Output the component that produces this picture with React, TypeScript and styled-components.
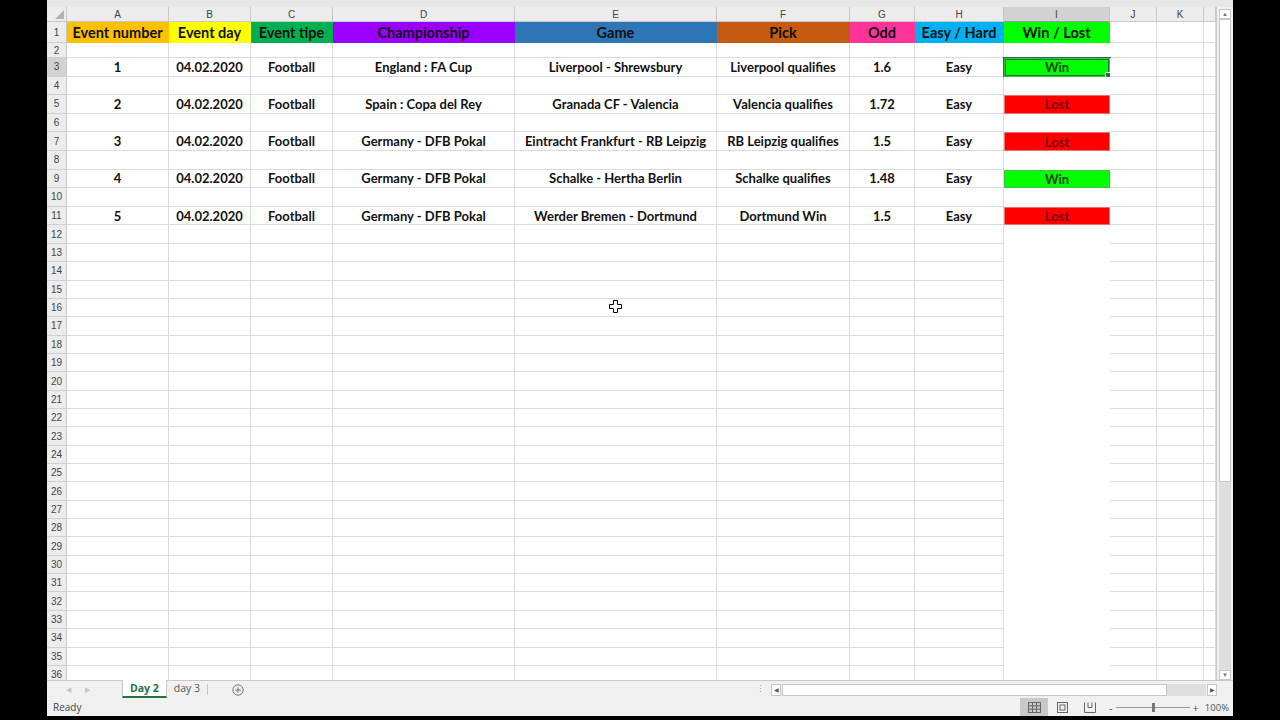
import styled, { createGlobalStyle } from "styled-components"

const GlobalStyle = createGlobalStyle`
  html, body {
    margin: 0;
    background: #000;
  }
`

const Screen = styled.div`
  width: 1280px;
  height: 720px;
  background: #000;
  display: flex;
  overflow: hidden;
  position: relative;
`

const Window = styled.div`
  margin-left: 47px;
  width: 1186px;
  height: 716px;
  background: #f0f0f0;
  display: flex;
  flex-direction: column;
`

const TopStrip = styled.div`
  height: 7px;
  background: #e6e6e6;
`

const Main = styled.div`
  display: flex;
  height: 673px;
`

const Sheet = styled.div`
  display: grid;
  grid-template-columns: 20px 102px 82px 82px 182px 202px 133px 65px 89px 106px 47px 47px 12px;
  grid-template-rows: 15px 21px 15px repeat(10, 18.6px) repeat(24, 18.35px);
  width: 1169px;
  overflow: hidden;
  background: #fff;
  position: relative;
`

const Corner = styled.div`
  background: #ececec;
  border-right: 1px solid #c8c8c8;
  border-bottom: 1px solid #c8c8c8;
  display: flex;
  align-items: flex-end;
  justify-content: flex-end;
  padding: 0 2px 2px 0;
  box-sizing: border-box;
`

const HeadCell = styled.div<{ $active?: boolean }>`
  box-sizing: border-box;
  background: ${(p) => (p.$active ? "#d2d2d2" : "#ececec")};
  border-right: 1px solid #c8c8c8;
  border-bottom: 1px solid ${(p) => (p.$active ? "#9e9e9e" : "#c8c8c8")};
  display: flex;
  align-items: center;
  justify-content: center;
  font-family: "Liberation Sans", Arial, sans-serif;
  font-size: 10px;
  color: #444;
  overflow: hidden;
`

const RowHead = styled(HeadCell)`
  border-bottom: 1px solid #d0d0d0;
`

const Cell = styled.div<{ $fill?: string; $big?: boolean }>`
  box-sizing: border-box;
  background: ${(p) => p.$fill ?? "#fff"};
  border-right: 1px solid ${(p) => p.$fill ?? "#dadada"};
  border-bottom: 1px solid ${(p) => p.$fill ?? "#dadada"};
  display: flex;
  align-items: center;
  justify-content: center;
  font-family: Lato, "Open Sans", sans-serif;
  font-weight: 700;
  font-size: ${(p) => (p.$big ? "14.5px" : "13px")};
  color: #111;
  white-space: nowrap;
  overflow: hidden;
  position: relative;
`

const ResultCell = styled.div<{ $fill: string; $edge: string; $ink: string; $selected?: boolean }>`
  box-sizing: border-box;
  background: ${(p) => p.$fill};
  border: 1px solid ${(p) => p.$edge};
  display: flex;
  align-items: center;
  justify-content: center;
  font-family: Lato, "Open Sans", sans-serif;
  font-weight: 700;
  font-size: 13px;
  color: ${(p) => p.$ink};
  position: relative;
  box-shadow: ${(p) => (p.$selected ? "0 0 0 1px #217346, inset 0 0 0 1px #217346" : "none")};
`

const Handle = styled.span`
  position: absolute;
  right: -3px;
  bottom: -3px;
  width: 5px;
  height: 5px;
  background: #217346;
  border: 1px solid #fff;
`

const VScroll = styled.div`
  width: 17px;
  border-left: 1px solid #c8c8c8;
  box-sizing: border-box;
  background: #f0f0f0;
  display: flex;
  flex-direction: column;
  align-items: center;
  padding-top: 2px;
`

const ScrollBtn = styled.div`
  width: 12px;
  height: 10px;
  background: #fff;
  border: 1px solid #c6c6c6;
  box-sizing: border-box;
  display: flex;
  align-items: center;
  justify-content: center;
  font-size: 6px;
  color: #777;
`

const VTrack = styled.div`
  flex: 1;
  width: 12px;
  background: #dedede;
  display: flex;
  flex-direction: column;
`

const VThumb = styled.div`
  height: 463px;
  background: #fff;
  border: 1px solid #c6c6c6;
  box-sizing: border-box;
`

const TabBar = styled.div`
  height: 18px;
  display: flex;
  align-items: stretch;
  background: #f0f0f0;
  border-top: 1px solid #c8c8c8;
  box-sizing: border-box;
`

const NavArrows = styled.div`
  width: 75px;
  display: flex;
  align-items: center;
  gap: 14px;
  padding-left: 19px;
  font-size: 7px;
  color: #c4c4c4;
  box-sizing: border-box;
`

const Tab = styled.div<{ $active?: boolean }>`
  padding: 0 ${(p) => (p.$active ? "7px" : "6px")};
  display: flex;
  align-items: center;
  font-family: "Open Sans", "Noto Sans", sans-serif;
  font-size: 10.5px;
  font-weight: ${(p) => (p.$active ? 700 : 400)};
  color: ${(p) => (p.$active ? "#217346" : "#555")};
  background: ${(p) => (p.$active ? "#fff" : "transparent")};
  border-bottom: 2px solid ${(p) => (p.$active ? "#217346" : "transparent")};
  border-left: 1px solid ${(p) => (p.$active ? "#c8c8c8" : "transparent")};
  border-right: 1px solid ${(p) => (p.$active ? "#c8c8c8" : "transparent")};
  margin-top: -1px;
`

const TabSep = styled.div`
  width: 1px;
  margin: 3px 0;
  background: #c8c8c8;
`

const AddSheet = styled.div`
  margin-left: 24px;
  display: flex;
  align-items: center;
`

const Spacer = styled.div`
  flex: 1;
`

const Dots = styled.div`
  width: 22px;
  display: flex;
  align-items: center;
  justify-content: center;
  font-size: 9px;
  color: #999;
  line-height: 1;
`

const HScroll = styled.div`
  width: 446px;
  display: flex;
  align-items: center;
  gap: 1px;
  margin-right: 16px;
`

const HBtn = styled.div`
  width: 10px;
  height: 12px;
  background: #fff;
  border: 1px solid #c6c6c6;
  box-sizing: border-box;
  display: flex;
  align-items: center;
  justify-content: center;
  font-size: 6px;
  color: #555;
`

const HTrack = styled.div`
  flex: 1;
  height: 12px;
  background: #dedede;
  display: flex;
`

const HThumb = styled.div`
  width: 385px;
  background: #fff;
  border: 1px solid #c6c6c6;
  box-sizing: border-box;
`

const StatusBar = styled.div`
  height: 18px;
  display: flex;
  align-items: center;
  padding-left: 6px;
  font-family: "Open Sans", "Noto Sans", sans-serif;
  font-size: 10px;
  color: #444;
`

const ViewBtn = styled.div<{ $on?: boolean }>`
  width: 28px;
  height: 18px;
  display: flex;
  align-items: center;
  justify-content: center;
  background: ${(p) => (p.$on ? "#c8c8c8" : "transparent")};
`

const Zoom = styled.div`
  display: flex;
  align-items: center;
  margin-left: 5px;
  gap: 3px;
  color: #555;
  font-size: 11px;
`

const ZoomLine = styled.div`
  width: 74px;
  height: 1px;
  background: #9a9a9a;
  position: relative;
`

const ZoomThumb = styled.span`
  position: absolute;
  left: 36px;
  top: -4px;
  width: 3px;
  height: 9px;
  background: #777;
`

const Percent = styled.span`
  margin-left: 6px;
  margin-right: 4px;
  font-size: 9.5px;
  color: #555;
`

const Cursor = styled.svg`
  position: absolute;
  left: 609px;
  top: 300px;
`

const LETTERS = ["A", "B", "C", "D", "E", "F", "G", "H", "I", "J", "K", ""]

const HEADERS: [string, string][] = [
  ["Event number", "#ffc000"],
  ["Event day", "#ffff00"],
  ["Event tipe", "#00b050"],
  ["Championship", "#9a00ff"],
  ["Game", "#2e75b6"],
  ["Pick", "#c55a11"],
  ["Odd", "#ff3399"],
  ["Easy / Hard", "#00b0f0"],
  ["Win / Lost", "#00ff00"],
]

const EVENTS = [
  ["1", "04.02.2020", "Football", "England : FA Cup", "Liverpool - Shrewsbury", "Liverpool qualifies", "1.6", "Easy", "Win"],
  ["2", "04.02.2020", "Football", "Spain : Copa del Rey", "Granada CF - Valencia", "Valencia qualifies", "1.72", "Easy", "Lost"],
  ["3", "04.02.2020", "Football", "Germany - DFB Pokal", "Eintracht Frankfurt - RB Leipzig", "RB Leipzig qualifies", "1.5", "Easy", "Lost"],
  ["4", "04.02.2020", "Football", "Germany - DFB Pokal", "Schalke - Hertha Berlin", "Schalke qualifies", "1.48", "Easy", "Win"],
  ["5", "04.02.2020", "Football", "Germany - DFB Pokal", "Werder Bremen - Dortmund", "Dortmund Win", "1.5", "Easy", "Lost"],
]

function eventForRow(row: number) {
  if (row >= 3 && row <= 11 && row % 2 === 1) return EVENTS[(row - 3) / 2]
  return null
}

function SheetRow({ row }: { row: number }) {
  const ev = eventForRow(row)
  return (
    <>
      <RowHead $active={row === 3}>{row}</RowHead>
      {LETTERS.map((letter, i) => {
        if (row === 1 && i < HEADERS.length) {
          return (
            <Cell key={letter + i} $fill={HEADERS[i][1]} $big>
              {HEADERS[i][0]}
            </Cell>
          )
        }
        if (i === 8) {
          if (ev) {
            const win = ev[8] === "Win"
            return (
              <ResultCell
                key="I"
                $fill={win ? "#00ff00" : "#ff0000"}
                $edge={win ? "#3cc43c" : "#f07070"}
                $ink={win ? "#0d3d0d" : "#7a0000"}
                $selected={row === 3}
              >
                {ev[8]}
                {row === 3 && <Handle />}
              </ResultCell>
            )
          }
          return <Cell key="I" $fill="#fff" />
        }
        return <Cell key={letter + i}>{ev && i < 8 ? ev[i] : ""}</Cell>
      })}
    </>
  )
}

export default function App() {
  const rows = Array.from({ length: 36 }, (_, i) => i + 1)
  return (
    <Screen>
      <GlobalStyle />
      <Window>
        <TopStrip />
        <Main>
          <Sheet>
            <Corner>
              <svg width="9" height="9" viewBox="0 0 9 9">
                <polygon points="9,0 9,9 0,9" fill="#b4b4b4" />
              </svg>
            </Corner>
            {LETTERS.map((l, i) => (
              <HeadCell key={"h" + i} $active={l === "I"}>
                {l}
              </HeadCell>
            ))}
            {rows.map((r) => (
              <SheetRow key={r} row={r} />
            ))}
          </Sheet>
          <VScroll>
            <ScrollBtn>▲</ScrollBtn>
            <VTrack>
              <VThumb />
            </VTrack>
            <ScrollBtn>▼</ScrollBtn>
          </VScroll>
        </Main>
        <TabBar>
          <NavArrows>
            <span>◀</span>
            <span>▶</span>
          </NavArrows>
          <Tab $active>Day 2</Tab>
          <Tab>day 3</Tab>
          <TabSep />
          <AddSheet>
            <svg width="12" height="12" viewBox="0 0 12 12">
              <circle cx="6" cy="6" r="5.2" fill="none" stroke="#777" strokeWidth="1" />
              <path d="M6 3.2v5.6M3.2 6h5.6" stroke="#777" strokeWidth="1.1" />
            </svg>
          </AddSheet>
          <Spacer />
          <Dots>⋮</Dots>
          <HScroll>
            <HBtn>◀</HBtn>
            <HTrack>
              <HThumb />
            </HTrack>
            <HBtn>▶</HBtn>
          </HScroll>
        </TabBar>
        <StatusBar>
          Ready
          <Spacer />
          <ViewBtn $on>
            <svg width="13" height="11" viewBox="0 0 13 11">
              <rect x="0.5" y="0.5" width="12" height="10" fill="none" stroke="#666" />
              <path d="M4.5 0.5v10M8.5 0.5v10M0.5 3.8h12M0.5 7.2h12" stroke="#666" />
            </svg>
          </ViewBtn>
          <ViewBtn>
            <svg width="11" height="11" viewBox="0 0 11 11">
              <rect x="0.5" y="0.5" width="10" height="10" fill="none" stroke="#666" />
              <rect x="3" y="3" width="5" height="5" fill="none" stroke="#666" />
            </svg>
          </ViewBtn>
          <ViewBtn>
            <svg width="12" height="11" viewBox="0 0 12 11">
              <path d="M0.5 0.5v10h11v-10M4 0.5v5h4v-5" fill="none" stroke="#666" />
            </svg>
          </ViewBtn>
          <Zoom>
            <span>-</span>
            <ZoomLine>
              <ZoomThumb />
            </ZoomLine>
            <span>+</span>
          </Zoom>
          <Percent>100%</Percent>
        </StatusBar>
      </Window>
      <Cursor width="13" height="13" viewBox="0 0 13 13">
        <path
          d="M4.5 0.5h4v4h4v4h-4v4h-4v-4h-4v-4h4z"
          fill="#fff"
          stroke="#000"
          strokeWidth="1"
        />
      </Cursor>
    </Screen>
  )
}
